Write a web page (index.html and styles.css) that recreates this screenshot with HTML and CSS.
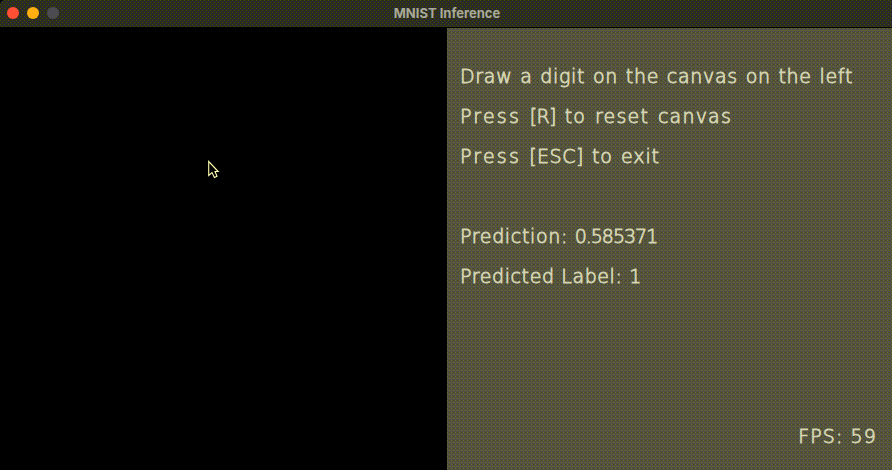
FILE: index.html
```html
<!DOCTYPE html>
<html lang="en">
<head>
<meta charset="utf-8">
<title>MNIST Inference</title>
<link rel="stylesheet" href="styles.css">
</head>
<body>
<div class="window">
  <header class="titlebar">
    <div class="lights"><i class="light close"></i><i class="light minimize"></i><i class="light zoom"></i></div>
    <h1 class="title">MNIST Inference</h1>
  </header>
  <main class="content">
    <section class="canvas">
      <svg class="cursor" width="12" height="19" viewBox="0 0 12 19"><path d="M.7 1.5V15.5L4 12.6L6.4 17.5L9 16.3L7 11.5H10.2Z" fill="#000" stroke="#ffffb0" stroke-width="1.1"/></svg>
    </section>
    <section class="panel">
      <p class="line draw">Draw a digit on the canvas on the left</p>
      <p class="line reset"><span class="verb">Press</span> <span class="key">[R]</span> to reset canvas</p>
      <p class="line exit"><span class="verb">Press</span> <span class="key">[ESC]</span> to exit</p>
      <p class="line prediction">Prediction: <span class="value">0.585371</span></p>
      <p class="line label">Predicted Label: 1</p>
      <p class="line fps">FPS: 59</p>
    </section>
  </main>
</div>
</body>
</html>
```
FILE: styles.css
```css
* { box-sizing: border-box; }
body { margin: 0; background: #000; }
.window { width: 892px; height: 470px; display: flex; flex-direction: column; overflow: hidden; border-top-left-radius: 5px; background: #000; }
.titlebar {
  height: 27px; display: grid; grid-template-columns: 60px 1fr 60px; align-items: center; padding-bottom: 2px;
  background:
    conic-gradient(at 1px 1px, transparent 75%, #494900 0) 0 0 / 4px 4px,
    conic-gradient(at 1px 1px, transparent 75%, #494900 0) 2px 2px / 4px 4px,
    conic-gradient(at 1px 1px, transparent 75%, #242449 0) 1px 1px / 2px 2px,
    #2b2f18;
}
.lights { display: flex; gap: 8px; padding-left: 7px; }
.light { width: 12px; height: 12px; border-radius: 50%; }
.close { background: #ff4f35; }
.minimize { background: #ffb010; }
.zoom { background: #4b4b50; }
.title { margin: 0; text-align: center; font: 700 13px/24px Inter, sans-serif; color: #a9a99a; padding-left: 2px; }
.content { flex: 1; display: grid; grid-template-columns: 447px 1fr; padding-top: 1px; }
.canvas { background: #000; padding: 132px 0 0 208px; }
.cursor { display: block; }
.panel {
  display: flex; flex-direction: column; padding: 28px 16px 34px 13px;
  background:
    conic-gradient(at 1px 1px, transparent 75%, #6d6d24 0) 0 0 / 4px 4px,
    conic-gradient(at 1px 1px, transparent 75%, #6d6d24 0) 2px 2px / 4px 4px,
    conic-gradient(at 1px 1px, transparent 75%, #494900 0) 2px 0 / 4px 4px,
    conic-gradient(at 1px 1px, transparent 75%, #606020 0) 0 2px / 4px 4px,
    #505049;
}
.line {
  margin: 0 0 20px; height: 20px; font: 200 19px/41px "DejaVu Sans", sans-serif;
  white-space: nowrap; color: #d4d4b0; -webkit-text-stroke: .8px #d4d4b0;
}
.draw { letter-spacing: .7px; word-spacing: 1px; }
.reset { letter-spacing: 1.2px; word-spacing: 1.6px; }
.exit { letter-spacing: .9px; word-spacing: 1.2px; margin-bottom: 60px; }
.verb { letter-spacing: 2.2px; }
.reset .key { letter-spacing: -.7px; }
.exit .key { letter-spacing: .5px; }
.prediction { letter-spacing: .65px; }
.value { letter-spacing: -1px; }
.label { letter-spacing: .6px; }
.fps { letter-spacing: 1.1px; margin: auto -1px 0 0; align-self: flex-end; }
```
